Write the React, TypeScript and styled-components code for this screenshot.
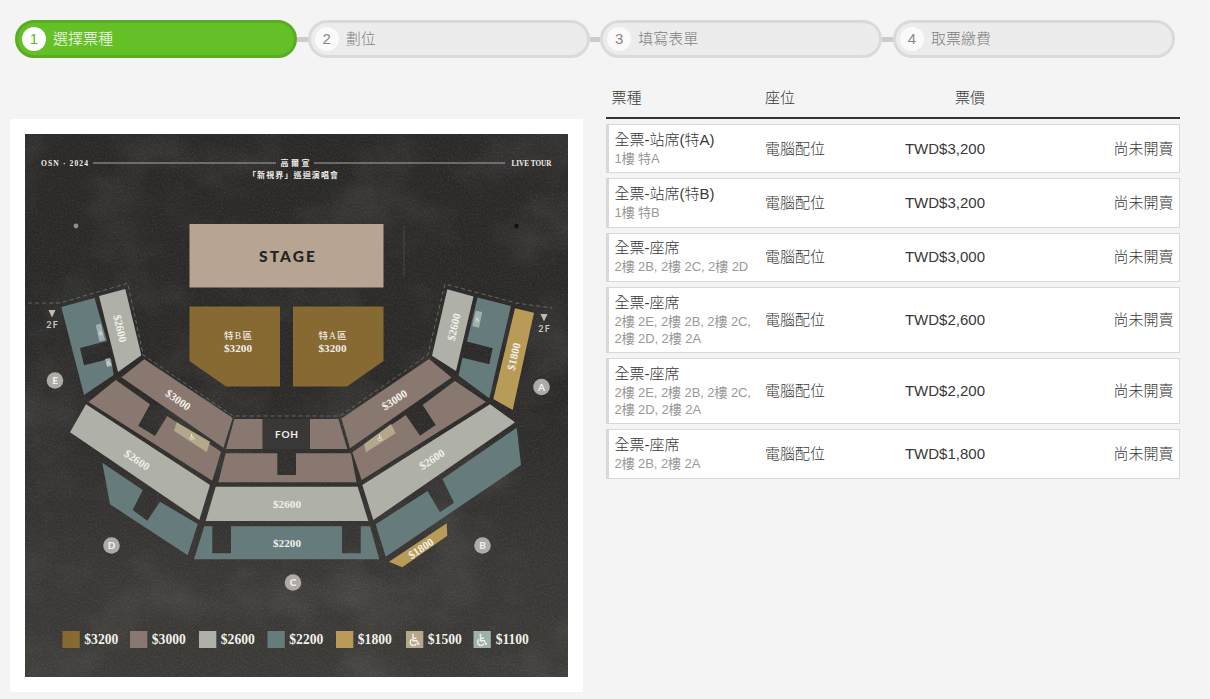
import React from "react";
import styled, { createGlobalStyle, css } from "styled-components";

const GlobalStyle = createGlobalStyle`
  body {
    margin: 0;
    background: #f4f4f4;
    color: #383838;
    font: 300 15px/20px "Liberation Sans", "Noto Sans CJK TC", sans-serif;
  }
  * { box-sizing: border-box; }
`;

const Page = styled.main`
  width: 1210px;
  height: 699px;
  overflow: hidden;
  padding-top: 20px;
`;

const Steps = styled.ol`
  display: flex;
  align-items: center;
  list-style: none;
  margin: 0;
  padding: 0 35px 0 15px;
`;

const Connector = styled.li`
  width: 10.5px;
  height: 5px;
  background: #ccc;
`;

const Step = styled.li<{ $active?: boolean }>`
  flex: 1;
  display: flex;
  align-items: center;
  gap: 7px;
  height: 38px;
  padding-left: 4px;
  border: 3px solid #dadada;
  border-radius: 19px;
  background: #ececec;
  color: #808080;
  ${(p) =>
    p.$active &&
    css`
      border-color: #5aac25;
      background: #64c026;
      color: #fff;
    `}
`;

const StepNumber = styled.span<{ $active?: boolean }>`
  width: 24px;
  height: 24px;
  border-radius: 50%;
  background: ${(p) => (p.$active ? "#fff" : "#fafafa")};
  color: ${(p) => (p.$active ? "#5fb526" : "#888")};
  font-size: 15px;
  line-height: 24px;
  text-align: center;
`;

const Content = styled.div`
  display: flex;
  align-items: flex-start;
  gap: 23px;
  padding-left: 10px;
`;

const MapCard = styled.section`
  width: 573px;
  height: 573px;
  margin-top: 61px;
  padding: 15px;
  background: #fff;
`;

const MapSvg = styled.svg`
  display: block;
  width: 543px;
  height: 543px;
`;

const Tickets = styled.section`
  width: 574px;
  padding-top: 21px;
`;

const columns = css`
  display: grid;
  grid-template-columns: 150.5px 120px 100px 1fr;
  align-items: center;
`;

const HeaderRow = styled.div`
  ${columns}
  height: 40px;
  margin-bottom: 5px;
  padding: 0 6px 1px 8.5px;
  border-bottom: 2px solid #333;
`;

const TicketRow = styled.div<{ $tall?: boolean }>`
  ${columns}
  height: ${(p) => (p.$tall ? 66 : 49.4)}px;
  margin-bottom: 5px;
  padding: 0 5.5px;
  border: 1px solid #d8d8d8;
  border-left-width: 3px;
  background: #fff;
`;

const TypeHead = styled.span`
  margin-left: -3px;
`;

const Name = styled.div`
  line-height: 18px;
`;

const Areas = styled.div`
  width: 144px;
  color: #999;
  font-size: 13px;
  font-weight: 400;
  line-height: 17px;
  letter-spacing: -0.08px;
  margin-top: 1px;
`;

const Right = styled.span`
  text-align: right;
`;

const steps = ["選擇票種", "劃位", "填寫表單", "取票繳費"];

const tickets = [
  { name: "全票-站席(特A)", areas: "1樓 特A", price: "TWD$3,200" },
  { name: "全票-站席(特B)", areas: "1樓 特B", price: "TWD$3,200" },
  { name: "全票-座席", areas: "2樓 2B, 2樓 2C, 2樓 2D", price: "TWD$3,000" },
  { name: "全票-座席", areas: "2樓 2E, 2樓 2B, 2樓 2C, 2樓 2D, 2樓 2A", price: "TWD$2,600", tall: true },
  { name: "全票-座席", areas: "2樓 2E, 2樓 2B, 2樓 2C, 2樓 2D, 2樓 2A", price: "TWD$2,200", tall: true },
  { name: "全票-座席", areas: "2樓 2B, 2樓 2A", price: "TWD$1,800" },
];

const C = {
  ochre: "#866a31",
  mauve: "#89786f",
  grey: "#afb1a8",
  teal: "#667c7c",
  gold: "#b99b58",
  sand: "#b5a78a",
  mint: "#9fb1ac",
};

const seats: [string, string][] = [
  [C.ochre, "189.5,306.5 280,306.5 280,386.5 226,386.5 189.5,361"],
  [C.ochre, "293,306.5 383.5,306.5 383.5,361 347,386.5 293,386.5"],
  // block E
  [C.teal, "61.3,307 94.5,298 107,341 80,348 84,365.3 111,358.5 113.7,375 84,395"],
  [C.grey, "99,296 125.3,289 141.3,355.3 118,372"],
  [C.mint, "95.7,325 100.7,323.5 105,340 99.5,341.5"],
  [C.mint, "105,359 110,358 112,366 107,367"],
  // block D
  [C.mauve, "144.3,359.3 232.7,418 223.5,447.7 121.5,377.3"],
  [C.mauve, "115.7,380 150,404.3 138.3,425.7 155,436 167.3,416 221,451.7 212.3,480.7 88.5,402"],
  [C.sand, "176.7,422.3 210,441.7 206.7,452.3 174,430.7"],
  [C.grey, "86,404.3 210,485 199.3,520 70,432.3"],
  [C.teal, "102.3,462.7 142.7,490 132.7,510 147.3,520.7 160,501.7 197.7,524 187.7,555.3 110,504.3"],
  // block C
  [C.mauve, "234.3,419 262.7,419 262.7,449 226,449"],
  [C.mauve, "310,419 338.3,419 347.3,449 310,449"],
  [C.mauve, "225.7,453.3 277.3,453.3 277.3,475 296,475 296,453.3 351,453.3 356.5,482.3 218.3,482.3"],
  [C.grey, "215.7,486.7 357.7,486.7 368.3,521 205.7,521"],
  [C.teal, "204.3,526.3 212.3,526.3 212.3,553.3 231,553.3 231,526.3 342,526.3 342,553.3 360.7,553.3 360.7,526.3 370,526.3 379.3,559.3 194,559.3"],
  // block B
  [C.mauve, "429,359 451.5,377.5 350,448.3 341.5,418.5"],
  [C.mauve, "455,381 486,402 361.7,480 352.3,452.3 405.7,415 420,435.7 435.7,425 422.7,405"],
  [C.sand, "391,424 395.7,433.3 366,452.3 364,444.3"],
  [C.grey, "490,404.3 515,422.3 373.3,520 362.3,485"],
  [C.teal, "516.7,427.7 521,465 385.7,556.7 375.7,524.3 427.5,491 440,512.3 454,502.7 442.5,479"],
  [C.gold, "446.7,523.3 447.3,535.7 402.3,567.3 389,561.7"],
  // block A
  [C.grey, "447.3,289.3 473.5,296.5 456,371 432,355.7"],
  [C.teal, "477.5,297.5 511,306 489.3,398.3 458.5,375.5 462.5,357.7 489.3,364.3 492.7,348.3 467,341.5"],
  [C.mint, "475.7,310.7 482.3,312 479,327.7 472.3,326"],
  [C.gold, "515,308.3 534,312.7 512.7,410 493.3,399"],
];

const prices: [string, number, number, number][] = [
  ["$3200", 238, 348.5, 0],
  ["$3200", 332.5, 348.5, 0],
  ["$2600", 120, 328.5, 77],
  ["$3000", 178, 400, 35],
  ["$2600", 137, 460, 34],
  ["$2600", 287, 504.5, 0],
  ["$2200", 287, 543.5, 0],
  ["$3000", 394.5, 400, -33],
  ["$2600", 432, 459.5, -33],
  ["$2600", 454, 327, -77],
  ["$1800", 514, 356.5, -77],
  ["$1800", 421, 548.5, -34],
];

const badges: [string, number, number][] = [
  ["A", 541.5, 387],
  ["B", 482.5, 545.5],
  ["C", 293, 582.5],
  ["D", 111.5, 545.5],
  ["E", 55, 380.5],
];

const legend: [string, string, number, boolean?][] = [
  ["$3200", C.ochre, 62.5],
  ["$3000", C.mauve, 130],
  ["$2600", C.grey, 199],
  ["$2200", C.teal, 267.5],
  ["$1800", C.gold, 336],
  ["$1500", C.sand, 406, true],
  ["$1100", C.mint, 473.5, true],
];

const serif = '"Liberation Serif", "Noto Sans CJK TC", serif';
const sans = 'Lato, "Noto Sans CJK TC", sans-serif';

function Wheelchair({ x, y, scale = 1 }: { x: number; y: number; scale?: number }) {
  return (
    <g transform={`translate(${x} ${y}) scale(${scale})`} fill="none" stroke="#f1efea" strokeWidth="1.4">
      <circle cx="-1" cy="-5.2" r="1.1" fill="#f1efea" stroke="none" />
      <path d="M-1 -4V.8H2.8L4.4 4.2L5.6 3.6M-1 -1.7H2.5M-2.4 -.6A3.3 3.3 0 1 0 2.4 3.6" />
    </g>
  );
}

function SeatMap() {
  return (
    <MapSvg viewBox="25 134 543 543" fill="#f1efea" textAnchor="middle">
      <defs>
        <linearGradient id="wall" x1="0" y1="0" x2="0" y2="1">
          <stop offset="0" stopColor="#292827" />
          <stop offset=".5" stopColor="#2b2a29" />
          <stop offset=".8" stopColor="#393735" />
          <stop offset="1" stopColor="#3c3a37" />
        </linearGradient>
        <filter id="grain" x="0" y="0" width="100%" height="100%">
          <feTurbulence type="fractalNoise" baseFrequency=".75 .5" numOctaves="2" seed="8" />
          <feColorMatrix values="0 0 0 0 .8  0 0 0 0 .78  0 0 0 0 .75  .7 0 0 0 -.28" />
        </filter>
        <filter id="smudge" x="0" y="0" width="100%" height="100%">
          <feTurbulence type="fractalNoise" baseFrequency=".012 .016" numOctaves="4" seed="3" />
          <feColorMatrix values="0 0 0 0 .8  0 0 0 0 .78  0 0 0 0 .75  .6 0 0 0 -.28" />
        </filter>
      </defs>
      <rect x="25" y="134" width="543" height="543" fill="url(#wall)" />
      <rect x="25" y="134" width="543" height="543" filter="url(#smudge)" opacity=".35" />
      <rect x="25" y="134" width="543" height="543" filter="url(#grain)" opacity=".28" />

      <path d="M93 163H276M314 163H505" stroke="#aaa7a2" strokeWidth="1" />
      <g fontFamily={serif} fontWeight="700" fontSize="8">
        <text x="64.5" y="165.8" fontSize="7.6" textLength="47">OSN · 2024</text>
        <text x="531.5" y="165.8" fontSize="7.2" textLength="40">LIVE TOUR</text>
        <text x="295" y="166" textLength="29">高爾宣</text>
        <text x="293" y="178" textLength="90">「新視界」巡迴演唱會</text>
      </g>
      <circle cx="76" cy="226" r="2.4" fill="#918f8b" />
      <circle cx="516.5" cy="226" r="2.2" fill="#111" />
      <path d="M404 226V276" stroke="#77746f" strokeWidth=".5" opacity=".7" />

      <rect x="189.5" y="224" width="194" height="63.5" fill="#b8a492" />
      <text x="287" y="261.5" fill="#252321" fontFamily={sans} fontWeight="900" fontSize="15.5" textLength="56">
        STAGE
      </text>
      <path
        d="M28 303L60 303L127.7 283.3L143.3 355L233 416H340L427.7 355L445 284L516 303L552 308"
        fill="none"
        stroke="#777570"
        strokeWidth=".8"
        strokeDasharray="4 3"
      />
      {seats.map(([fill, points]) => (
        <polygon key={points} points={points} fill={fill} />
      ))}
      <rect x="262.7" y="419" width="47.3" height="30" fill="#393837" />
      <text x="286.5" y="437.8" fontFamily={sans} fontWeight="700" fontSize="10" textLength="23">
        FOH
      </text>
      <Wheelchair x={192} y={437} scale={0.5} />
      <Wheelchair x={380} y={438} scale={0.5} />
      <Wheelchair x={100.5} y={333} scale={0.4} />
      <Wheelchair x={108.5} y={363} scale={0.4} />
      <Wheelchair x={477.3} y={319.5} scale={0.4} />

      <g fontFamily={serif} fontWeight="700" fontSize="11.2">
        <text x="238" y="339" fontWeight="500" fontSize="9.5" textLength="28">特B區</text>
        <text x="332.5" y="339" fontWeight="500" fontSize="9.5" textLength="28">特A區</text>
        {prices.map(([label, x, y, turn]) => (
          <text key={`${x}-${y}`} transform={`translate(${x} ${y}) rotate(${turn})`} y="3.7">
            {label}
          </text>
        ))}
      </g>
      <g fontFamily={sans} fontWeight="700">
        {badges.map(([label, x, y]) => (
          <g key={label}>
            <circle cx={x} cy={y} r="8.3" fill="#b0aaa7" />
            <text x={x} y={y + 3.5} fontSize="10" fontWeight="900">{label}</text>
          </g>
        ))}
        <path d="M48.5 310H55.5L52 317.5ZM540.5 314H547.5L544 321.5Z" fill="#c4bab4" />
        <text x="52" y="327.8" fontSize="9" textLength="11.5" fill="#c9c6c2">2F</text>
        <text x="544" y="332.2" fontSize="9" textLength="11.5" fill="#c9c6c2">2F</text>
      </g>
      <g fontFamily={serif} fontWeight="700" fontSize="13.6">
        {legend.map(([label, fill, x, accessible]) => (
          <g key={label}>
            <rect x={x} y="631" width="17.3" height="17" fill={fill} />
            {accessible && <Wheelchair x={x + 8} y={640} />}
            <text x={x + 38.8} y="643.6">{label}</text>
          </g>
        ))}
      </g>
    </MapSvg>
  );
}

export default function App() {
  return (
    <Page>
      <GlobalStyle />
      <Steps>
        {steps.map((label, i) => (
          <React.Fragment key={label}>
            {i > 0 && <Connector />}
            <Step $active={i === 0}>
              <StepNumber $active={i === 0}>{i + 1}</StepNumber>
              {label}
            </Step>
          </React.Fragment>
        ))}
      </Steps>
      <Content>
        <MapCard>
          <SeatMap />
        </MapCard>
        <Tickets>
          <HeaderRow>
            <TypeHead>票種</TypeHead>
            <span>座位</span>
            <Right>票價</Right>
          </HeaderRow>
          {tickets.map((t, i) => (
            <TicketRow key={i} $tall={t.tall}>
              <div>
                <Name>{t.name}</Name>
                <Areas>{t.areas}</Areas>
              </div>
              <span>電腦配位</span>
              <Right>{t.price}</Right>
              <Right>尚未開賣</Right>
            </TicketRow>
          ))}
        </Tickets>
      </Content>
    </Page>
  );
}
